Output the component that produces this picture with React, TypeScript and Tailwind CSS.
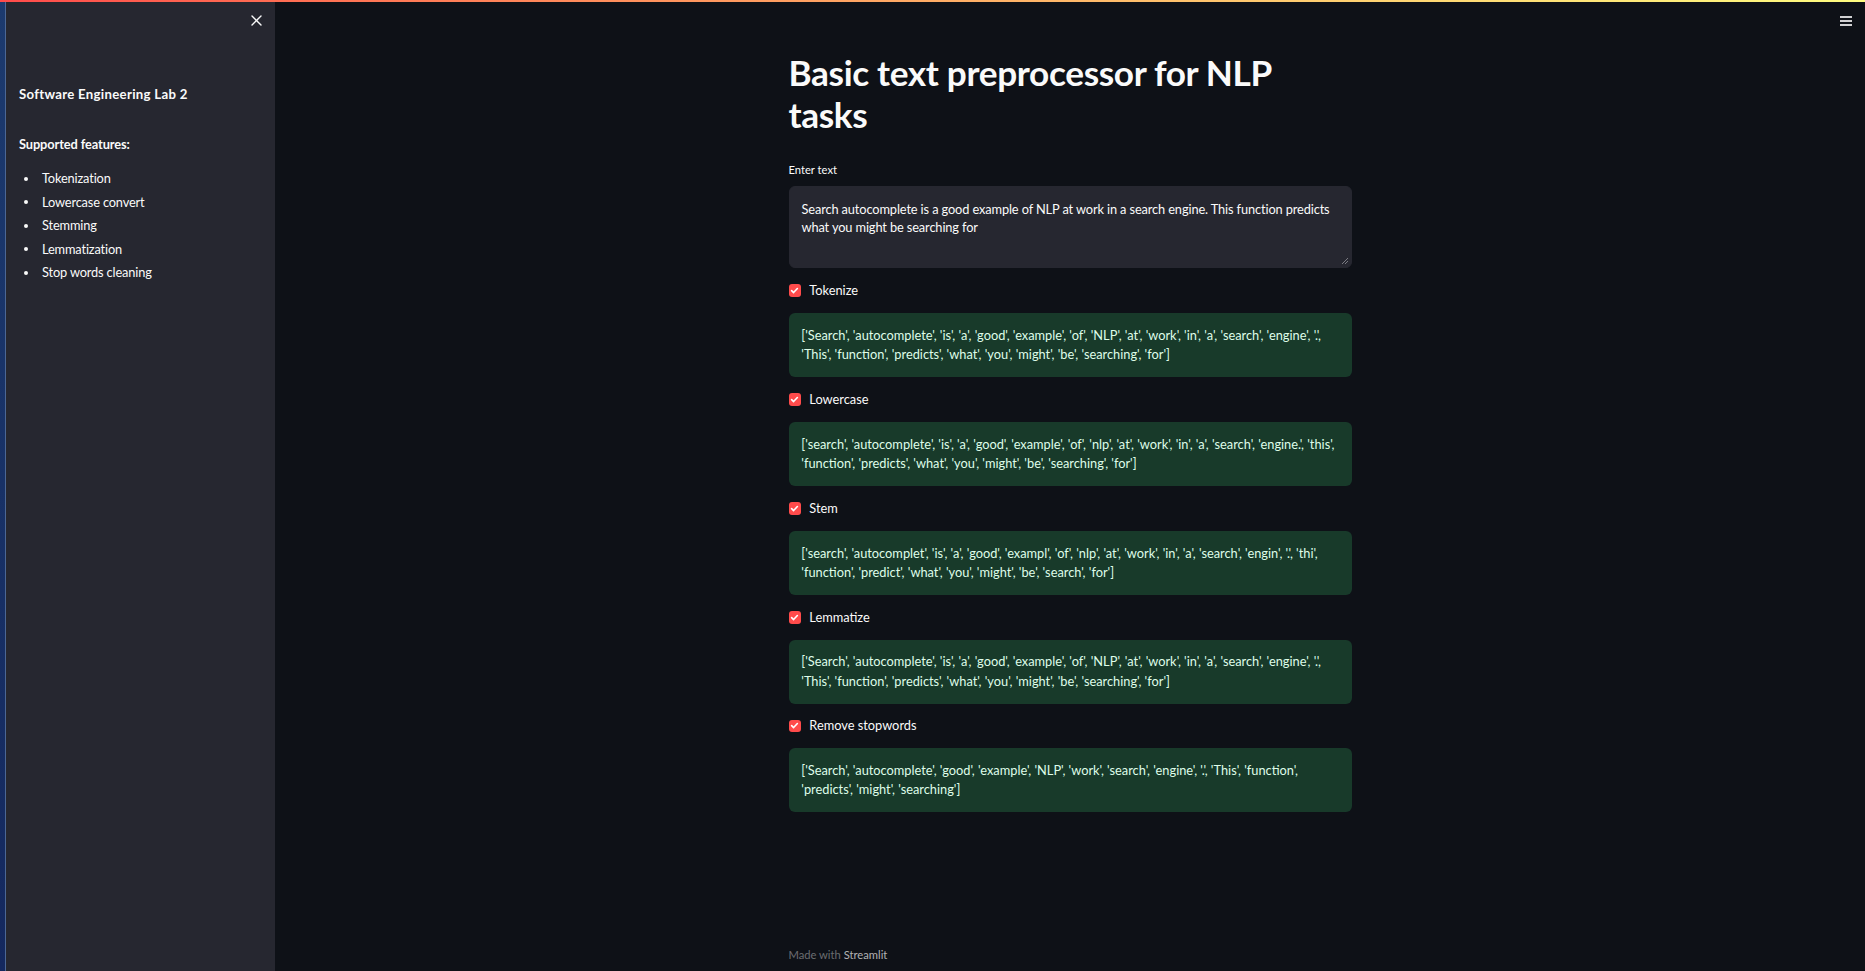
import React from "react";

const FONT = { fontFamily: '"Lato", "Source Sans Pro", "Noto Sans", sans-serif' };

const results: { label: string; text: string }[] = [
  {
    label: "Tokenize",
    text: "['Search', 'autocomplete', 'is', 'a', 'good', 'example', 'of', 'NLP', 'at', 'work', 'in', 'a', 'search', 'engine', '.', 'This', 'function', 'predicts', 'what', 'you', 'might', 'be', 'searching', 'for']",
  },
  {
    label: "Lowercase",
    text: "['search', 'autocomplete', 'is', 'a', 'good', 'example', 'of', 'nlp', 'at', 'work', 'in', 'a', 'search', 'engine.', 'this', 'function', 'predicts', 'what', 'you', 'might', 'be', 'searching', 'for']",
  },
  {
    label: "Stem",
    text: "['search', 'autocomplet', 'is', 'a', 'good', 'exampl', 'of', 'nlp', 'at', 'work', 'in', 'a', 'search', 'engin', '.', 'thi', 'function', 'predict', 'what', 'you', 'might', 'be', 'search', 'for']",
  },
  {
    label: "Lemmatize",
    text: "['Search', 'autocomplete', 'is', 'a', 'good', 'example', 'of', 'NLP', 'at', 'work', 'in', 'a', 'search', 'engine', '.', 'This', 'function', 'predicts', 'what', 'you', 'might', 'be', 'searching', 'for']",
  },
  {
    label: "Remove stopwords",
    text: "['Search', 'autocomplete', 'good', 'example', 'NLP', 'work', 'search', 'engine', '.', 'This', 'function', 'predicts', 'might', 'searching']",
  },
];

function Checkbox() {
  return (
    <span className="flex h-[12.8px] w-[12.8px] items-center justify-center rounded-[3px] bg-[#ff4b4b]">
      <svg width="9" height="9" viewBox="0 0 10 10" fill="none">
        <path d="M1.8 5.2 L4 7.3 L8.2 2.8" stroke="white" strokeWidth="1.8" strokeLinecap="round" strokeLinejoin="round" />
      </svg>
    </span>
  );
}

export default function App() {
  return (
    <div className="relative flex h-[971px] w-full overflow-hidden bg-[#0e1117] text-[#fafafa]" style={FONT}>
      {/* top decoration */}
      <div className="absolute left-0 right-0 top-0 z-10 h-[2px] bg-gradient-to-r from-[#ff4b4b] to-[#fffd80]" />

      {/* window edge */}
      <div className="w-[5px] shrink-0 bg-gradient-to-b from-[#1c3a6e] to-[#14285e]" />
      <div className="w-px shrink-0 bg-[#4c6794]" />

      {/* sidebar */}
      <aside className="relative flex w-[269px] shrink-0 flex-col bg-[#262730] px-[13px]">
        <div className="flex h-[41px] items-center justify-end pr-0">
          <svg width="11" height="11" viewBox="0 0 11 11" fill="none">
            <path d="M1 1 L10 10 M10 1 L1 10" stroke="#fafafa" strokeWidth="1.4" strokeLinecap="round" />
          </svg>
        </div>
        <div className="mt-[43px] text-[13.2px] font-bold leading-[20px] tracking-[0.3px]">Software Engineering Lab 2</div>
        <div className="mt-[30px] text-[12.8px] font-bold leading-[20px] tracking-[-0.1px]">Supported features:</div>
        <ul className="mt-[13px] flex flex-col text-[12.8px] tracking-[-0.15px]">
          {["Tokenization", "Lowercase convert", "Stemming", "Lemmatization", "Stop words cleaning"].map((t) => (
            <li key={t} className="flex h-[23.5px] items-center">
              <span className="ml-[5px] mr-[14px] h-[4px] w-[4px] rounded-full bg-[#fafafa]" />
              <span>{t}</span>
            </li>
          ))}
        </ul>
      </aside>

      {/* main */}
      <main className="flex flex-1 flex-col items-center">
        <div className="flex w-[563px] flex-col pt-[51px]">
          <h1 className="text-[35.2px] font-bold leading-[42.24px] tracking-[-0.35px]">
            Basic text preprocessor for NLP tasks
          </h1>
          <div className="mt-[26px] mb-[8px] text-[11.2px] leading-[17px]">Enter text</div>
          <div className="flex flex-col gap-[12.8px]">
            <div className="relative h-[82px] rounded-[6px] border border-[#262730] bg-[#262730] px-[12px] pt-[14px] pb-[12px] text-[12.8px] leading-[17.9px] tracking-[-0.12px]">
              Search autocomplete is a good example of NLP at work in a search engine. This function predicts what you might be searching for
              <svg className="absolute bottom-[2px] right-[2px]" width="9" height="9" viewBox="0 0 9 9">
                <path d="M8 2 L2 8 M8 5 L5 8" stroke="#7a7b82" strokeWidth="1" />
              </svg>
            </div>
            {results.map((r) => (
              <React.Fragment key={r.label}>
                <div className="flex h-[19.2px] items-center gap-[8px] text-[12.8px]">
                  <Checkbox />
                  <span>{r.label}</span>
                </div>
                <div className="rounded-[6px] bg-[#183a2a] px-[12.8px] py-[12.8px] text-[12.8px] leading-[19.2px] text-[#dffde9]">
                  {r.text}
                </div>
              </React.Fragment>
            ))}
          </div>
        </div>
        <div className="mt-auto w-[563px] pb-[9px] text-[11.2px] leading-[14px] text-[#fafafa]/40">
          Made with <span className="text-[#fafafa]/70">Streamlit</span>
        </div>
      </main>

      {/* hamburger */}
      <div className="absolute right-[13px] top-[16px] flex w-[12px] flex-col gap-[2.5px]">
        <span className="h-[1.5px] w-full bg-[#d0d0d2]" />
        <span className="h-[1.5px] w-full bg-[#d0d0d2]" />
        <span className="h-[1.5px] w-full bg-[#d0d0d2]" />
      </div>
    </div>
  );
}
